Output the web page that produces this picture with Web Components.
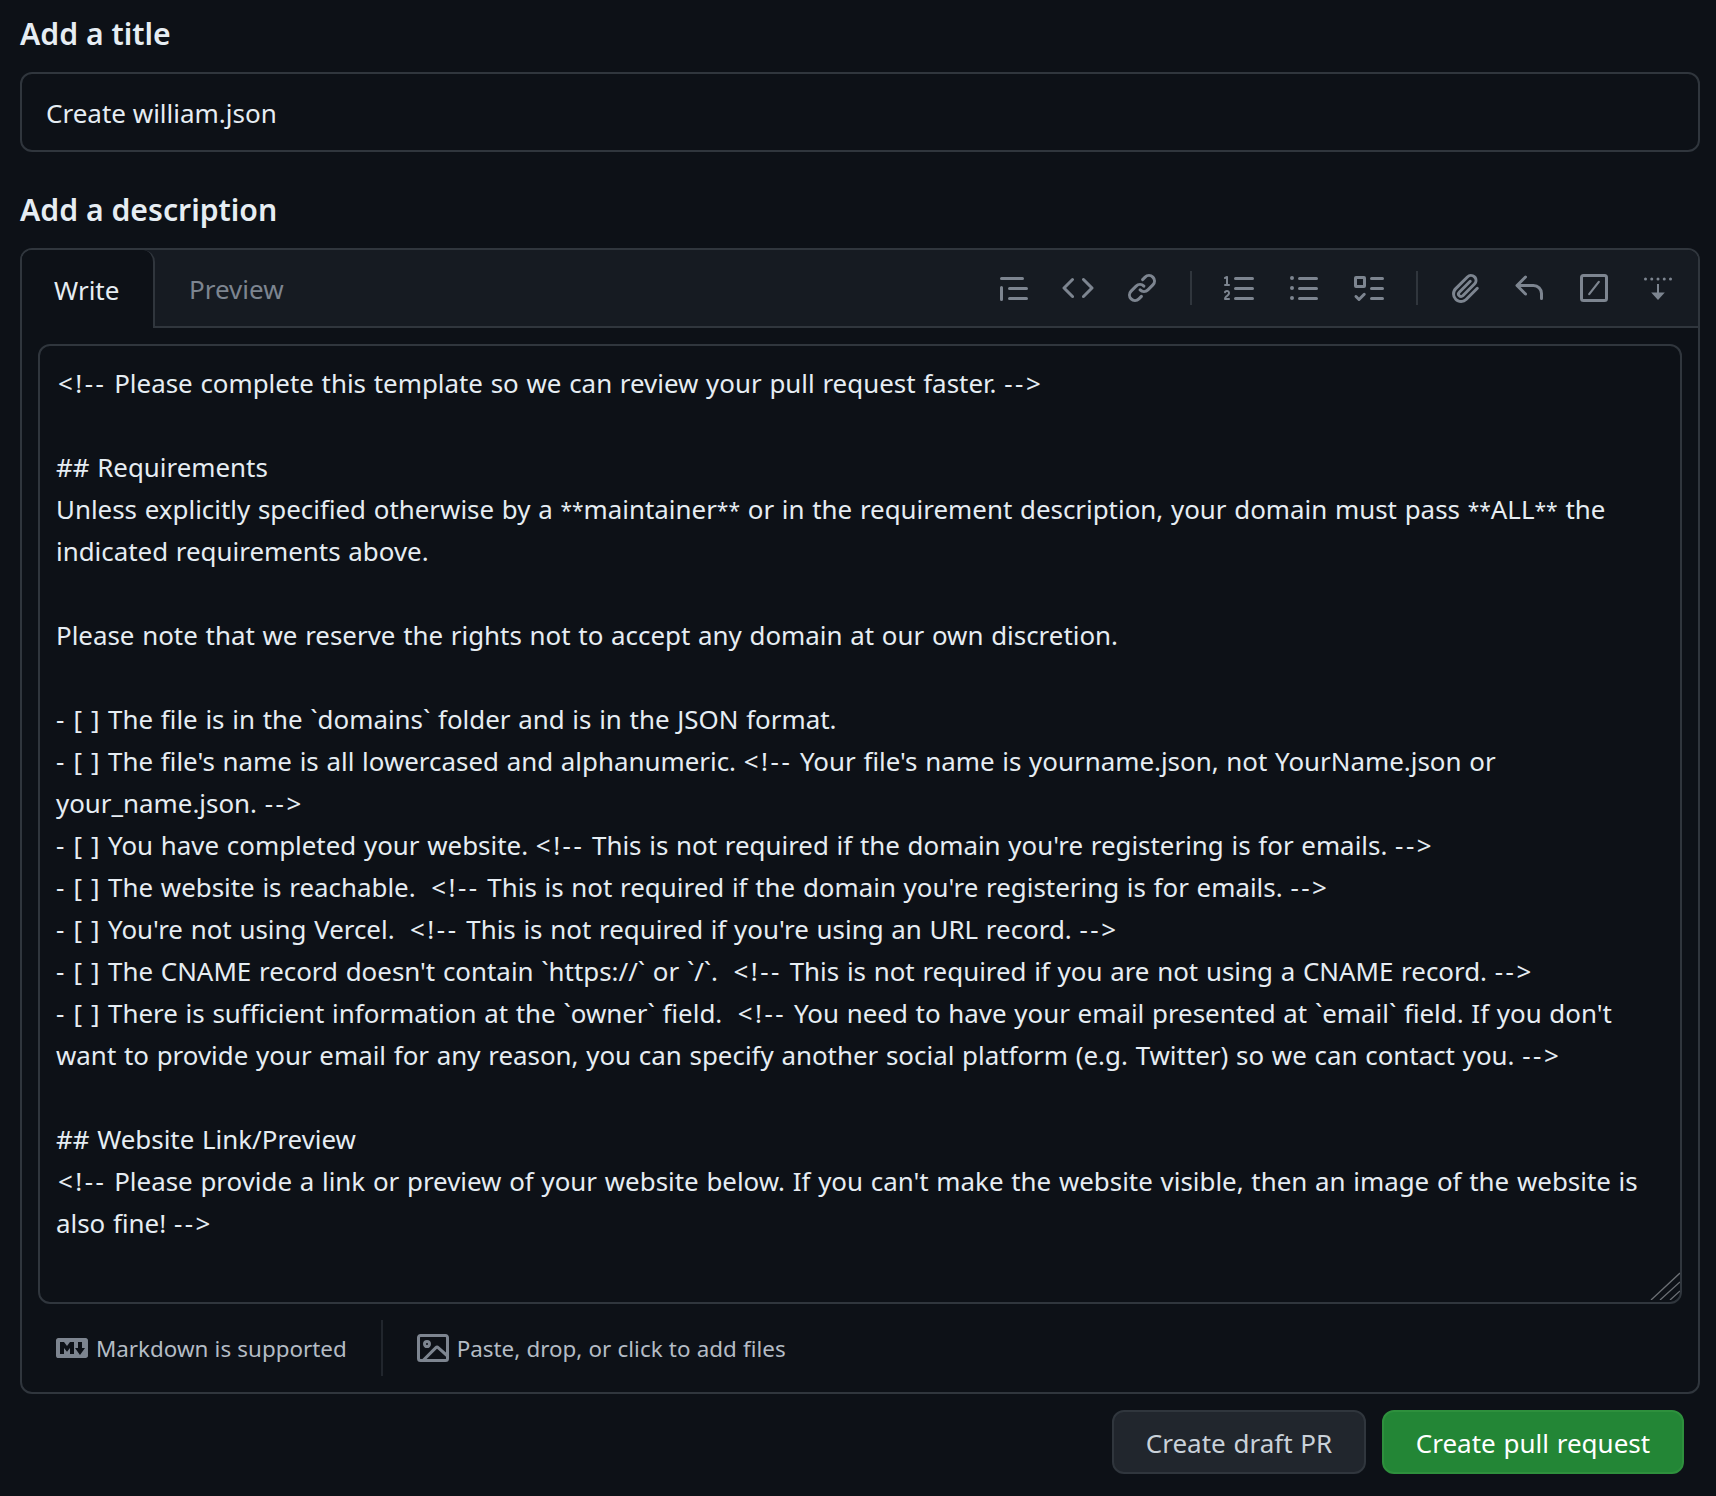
<!DOCTYPE html>
<html lang="en">
<head>
<meta charset="utf-8">
<title>Open a pull request</title>
<style>
  html, body { margin: 0; background: #0d1117; }
  body { font-family: "Noto Sans", "Open Sans", sans-serif; color: #e6edf3; }
</style>
</head>
<body>
<pr-form>
  <pr-label>Add a title</pr-label>
  <pr-input>Create william.json</pr-input>
  <pr-label style="margin-top:36px">Add a description</pr-label>
  <pr-editor>
    <pr-textarea>&lt;!-- Please complete this template so we can review your pull request faster. --&gt;

## Requirements
Unless explicitly specified otherwise by a **maintainer** or in the requirement description, your domain must pass **ALL** the
indicated requirements above.

Please note that we reserve the rights not to accept any domain at our own discretion.

- [ ] The file is in the `domains` folder and is in the JSON format.
- [ ] The file's name is all lowercased and alphanumeric. &lt;!-- Your file's name is yourname.json, not YourName.json or
your_name.json. --&gt;
- [ ] You have completed your website. &lt;!-- This is not required if the domain you're registering is for emails. --&gt;
- [ ] The website is reachable.  &lt;!-- This is not required if the domain you're registering is for emails. --&gt;
- [ ] You're not using Vercel.  &lt;!-- This is not required if you're using an URL record. --&gt;
- [ ] The CNAME record doesn't contain `https://` or `/`.  &lt;!-- This is not required if you are not using a CNAME record. --&gt;
- [ ] There is sufficient information at the `owner` field.  &lt;!-- You need to have your email presented at `email` field. If you don't
want to provide your email for any reason, you can specify another social platform (e.g. Twitter) so we can contact you. --&gt;

## Website Link/Preview
&lt;!-- Please provide a link or preview of your website below. If you can't make the website visible, then an image of the website is
also fine! --&gt;</pr-textarea>
  </pr-editor>
  <pr-actions>
    <pr-button>Create draft PR</pr-button>
    <pr-button variant="primary">Create pull request</pr-button>
  </pr-actions>
</pr-form>

<script>
const icons = {
  quote: `<path d="M1.75 2.5h10.5a.75.75 0 0 1 0 1.5H1.75a.75.75 0 0 1 0-1.5Zm4 5h8.5a.75.75 0 0 1 0 1.5h-8.5a.75.75 0 0 1 0-1.5Zm0 5h8.5a.75.75 0 0 1 0 1.5h-8.5a.75.75 0 0 1 0-1.5ZM2.5 7.75v6a.75.75 0 0 1-1.5 0v-6a.75.75 0 0 1 1.5 0Z"/>`,
  code: `<path d="m11.28 3.22 4.25 4.25a.75.75 0 0 1 0 1.06l-4.25 4.25a.749.749 0 0 1-1.275-.326.749.749 0 0 1 .215-.734L13.94 8l-3.72-3.72a.749.749 0 0 1 .326-1.275.749.749 0 0 1 .734.215Zm-6.56 0a.751.751 0 0 1 1.042.018.751.751 0 0 1 .018 1.042L2.06 8l3.72 3.72a.749.749 0 0 1-.326 1.275.749.749 0 0 1-.734-.215L.47 8.53a.75.75 0 0 1 0-1.06Z"/>`,
  link: `<path d="m7.775 3.275 1.25-1.25a3.5 3.5 0 1 1 4.95 4.95l-2.5 2.5a3.5 3.5 0 0 1-4.95 0 .751.751 0 0 1 .018-1.042.751.751 0 0 1 1.042-.018 1.998 1.998 0 0 0 2.83 0l2.5-2.5a2.002 2.002 0 0 0-2.83-2.83l-1.25 1.25a.751.751 0 0 1-1.042-.018.751.751 0 0 1-.018-1.042Zm-4.69 9.64a1.998 1.998 0 0 0 2.83 0l1.25-1.25a.751.751 0 0 1 1.042.018.751.751 0 0 1 .018 1.042l-1.25 1.25a3.5 3.5 0 1 1-4.95-4.95l2.5-2.5a3.5 3.5 0 0 1 4.95 0 .751.751 0 0 1-.018 1.042.751.751 0 0 1-1.042.018 1.998 1.998 0 0 0-2.83 0l-2.5 2.5a1.998 1.998 0 0 0 0 2.83Z"/>`,
  ordered: `<path d="M5 3.25a.75.75 0 0 1 .75-.75h8.5a.75.75 0 0 1 0 1.5h-8.5A.75.75 0 0 1 5 3.25Zm0 5a.75.75 0 0 1 .75-.75h8.5a.75.75 0 0 1 0 1.5h-8.5A.75.75 0 0 1 5 8.25Zm0 5a.75.75 0 0 1 .75-.75h8.5a.75.75 0 0 1 0 1.5h-8.5a.75.75 0 0 1-.75-.75ZM.924 10.32a.5.5 0 0 1-.851-.525l.001-.001.001-.002.002-.004.007-.011c.097-.144.215-.273.348-.384.228-.19.588-.392 1.068-.392.468 0 .858.181 1.126.484.259.294.377.673.377 1.038 0 .987-.686 1.495-1.156 1.845l-.047.035c-.303.225-.522.4-.654.597h1.357a.5.5 0 0 1 0 1H.5a.5.5 0 0 1-.5-.5c0-1.005.692-1.52 1.167-1.875l.035-.025c.531-.396.8-.625.8-1.078a.57.57 0 0 0-.128-.376C1.806 10.068 1.695 10 1.5 10a.658.658 0 0 0-.429.163.835.835 0 0 0-.144.153ZM2.003 2.5V6h.503a.5.5 0 0 1 0 1H.5a.5.5 0 0 1 0-1h.503V3.308l-.28.14a.5.5 0 0 1-.446-.895l1.003-.5a.5.5 0 0 1 .723.447Z"/>`,
  unordered: `<path d="M5.75 2.5h8.5a.75.75 0 0 1 0 1.5h-8.5a.75.75 0 0 1 0-1.5Zm0 5h8.5a.75.75 0 0 1 0 1.5h-8.5a.75.75 0 0 1 0-1.5Zm0 5h8.5a.75.75 0 0 1 0 1.5h-8.5a.75.75 0 0 1 0-1.5ZM2 14a1 1 0 1 1 0-2 1 1 0 0 1 0 2Zm1-6a1 1 0 1 1-2 0 1 1 0 0 1 2 0ZM2 4a1 1 0 1 1 0-2 1 1 0 0 1 0 2Z"/>`,
  tasks: `<path fill-rule="evenodd" d="M2 2h4a1 1 0 0 1 1 1v4a1 1 0 0 1-1 1H2a1 1 0 0 1-1-1V3a1 1 0 0 1 1-1Zm4.655 8.595a.75.75 0 0 1 0 1.06L4.03 14.28a.75.75 0 0 1-1.06 0l-1.5-1.5a.749.749 0 0 1 .326-1.275.749.749 0 0 1 .734.215l.97.97 2.095-2.095a.75.75 0 0 1 1.06 0ZM9.75 2.5h5.5a.75.75 0 0 1 0 1.5h-5.5a.75.75 0 0 1 0-1.5Zm0 5h5.5a.75.75 0 0 1 0 1.5h-5.5a.75.75 0 0 1 0-1.5Zm0 5h5.5a.75.75 0 0 1 0 1.5h-5.5a.75.75 0 0 1 0-1.5Zm-7.25-9v3h3v-3Z"/>`,
  paperclip: `<path d="M12.212 3.02a1.753 1.753 0 0 0-2.478.003l-5.83 5.83a3.007 3.007 0 0 0-.88 2.127c0 .795.315 1.551.88 2.116.567.567 1.333.89 2.126.89.79 0 1.548-.321 2.116-.89l5.48-5.48a.75.75 0 0 1 1.061 1.06l-5.48 5.48a4.492 4.492 0 0 1-3.177 1.33c-1.2 0-2.345-.487-3.187-1.33a4.483 4.483 0 0 1-1.32-3.177c0-1.195.475-2.341 1.32-3.186l5.83-5.83a3.25 3.25 0 0 1 5.553 2.297c0 .863-.343 1.691-.953 2.301L7.439 12.39c-.375.377-.884.59-1.416.593a1.998 1.998 0 0 1-1.412-.587 1.992 1.992 0 0 1 0-2.828l5.48-5.48a.751.751 0 0 1 1.042.018.751.751 0 0 1 .018 1.042l-5.48 5.48a.492.492 0 0 0 0 .707.499.499 0 0 0 .352.154.51.51 0 0 0 .356-.154l5.833-5.827a1.755 1.755 0 0 0 0-2.481Z"/>`,
  reply: `<path d="M6.78 1.97a.75.75 0 0 1 0 1.06L3.81 6h6.44A4.75 4.75 0 0 1 15 10.75v2.5a.75.75 0 0 1-1.5 0v-2.5a3.25 3.25 0 0 0-3.25-3.25H3.81l2.97 2.97a.749.749 0 0 1-.326 1.275.749.749 0 0 1-.734-.215L1.47 7.28a.75.75 0 0 1 0-1.06l4.25-4.25a.75.75 0 0 1 1.06 0Z"/>`,
  slash: `<rect x="1.75" y="1.75" width="12.5" height="12.5" rx="1" fill="none" stroke="currentColor" stroke-width="1.5"/><path d="M10.4 4.9 5.6 11.1" fill="none" stroke="currentColor" stroke-width="1.1" stroke-linecap="round"/>`,
  dotdown: `<circle cx="1.75" cy="3.5" r=".75"/><circle cx="4.87" cy="3.5" r=".75"/><circle cx="8" cy="3.5" r=".75"/><circle cx="11.12" cy="3.5" r=".75"/><circle cx="14.25" cy="3.5" r=".75"/><path d="M7.5 6h1v4.2H11.4L8 14 4.6 10.2h2.9Z"/>`,
  markdown: `<path fill-rule="evenodd" d="M14.85 3c.63 0 1.15.52 1.14 1.15v7.7c0 .63-.51 1.15-1.15 1.15H1.15C.52 13 0 12.48 0 11.84V4.15C0 3.52.52 3 1.15 3ZM9 11V5H7L5.5 7 4 5H2v6h2V8l1.5 1.92L7 8v3Zm2.99.5L14.5 8H13V5h-2v3H9.5Z"/>`,
  image: `<path fill-rule="evenodd" d="M16 13.25A1.75 1.75 0 0 1 14.25 15H1.75A1.75 1.75 0 0 1 0 13.25V2.75C0 1.784.784 1 1.75 1h12.5c.966 0 1.75.784 1.75 1.75ZM1.75 2.5a.25.25 0 0 0-.25.25v10.5c0 .138.112.25.25.25h.94l.03-.03 6.077-6.078a1.75 1.75 0 0 1 2.412-.06L14.5 10.31V2.75a.25.25 0 0 0-.25-.25Zm12.5 11a.25.25 0 0 0 .25-.25v-.917l-4.298-3.889a.25.25 0 0 0-.344.009L4.81 13.5ZM7 6a2 2 0 1 1-3.999.001A2 2 0 0 1 7 6ZM5.5 6a.5.5 0 1 0-1 0 .5.5 0 0 0 1 0Z"/>`
};

// shared helper, every component just sets its own markup
class ShadowBase extends HTMLElement {
  constructor() {
    super();
    this.attachShadow({ mode: "open" });
    this.shadowRoot.innerHTML = this.getInnerHTML();
  }
}

class PrIcon extends ShadowBase {
  getInnerHTML() {
    const name = this.getAttribute("name");
    return /*html*/ `
    <style>
      :host { display: block; width: 32px; height: 32px; flex: none; color: #7d8590; }
      svg { display: block; width: 32px; height: 32px; fill: currentColor; }
    </style>
    <svg viewBox="0 0 16 16" aria-hidden="true">${icons[name]}</svg>`;
  }
}

class PrForm extends ShadowBase {
  getInnerHTML() {
    return /*html*/ `
    <style>
      :host { display: block; padding: 12px 16px 0 20px; }
    </style>
    <slot></slot>`;
  }
}

class PrLabel extends ShadowBase {
  getInnerHTML() {
    return /*html*/ `
    <style>
      :host { display: block; font-size: 30.2px; line-height: 44px; font-weight: 600; margin-bottom: 16px; color: #e6edf3; }
    </style>
    <slot></slot>`;
  }
}

class PrInput extends ShadowBase {
  getInnerHTML() {
    return /*html*/ `
    <style>
      :host {
        display: flex; align-items: center; box-sizing: border-box; height: 80px;
        padding: 1px 24px 0; border: 2px solid #30363d; border-radius: 12px;
        font-size: 26px; color: #e6edf3;
      }
    </style>
    <slot></slot>`;
  }
}

class PrEditor extends ShadowBase {
  getInnerHTML() {
    const group = (names) => names.map((n) => `<pr-icon name="${n}"></pr-icon>`).join("");
    return /*html*/ `
    <style>
      :host { display: block; border: 2px solid #30363d; border-radius: 12px; }
      .head { display: flex; height: 78px; background: #161b22; border-radius: 10px 10px 0 0; }
      .tab {
        display: flex; align-items: center; box-sizing: border-box; font-size: 26px;
        padding: 2px 32px 0; color: #e6edf3;
      }
      .tab.active { width: 133px; background: #0d1117; border-right: 2px solid #30363d; border-radius: 10px 12px 0 0; }
      .rest { flex: 1; display: flex; align-items: center; box-sizing: border-box; border-bottom: 2px solid #30363d; padding-right: 24px; }
      .tab.muted { color: #7d8590; padding-left: 34px; }
      .tools { margin-left: auto; display: flex; align-items: center; }
      .group { display: flex; gap: 32px; }
      .group.last { gap: 32.4px; }
      .sep { width: 2px; height: 34px; background: #30363d; margin: 0 32px; }
      .sep.second { margin-right: 31px; }
      .body { padding: 16px 16px 0; }
      .foot { display: flex; align-items: center; height: 88px; padding: 0 34px; box-sizing: border-box; font-size: 22.4px; word-spacing: .4px; color: #b4bcc5; }
      .foot .item { display: flex; align-items: center; gap: 8px; }
      .foot .vr { width: 2px; height: 56px; background: #21262d; margin: 0 34px; }
    </style>
    <div class="head">
      <div class="tab active">Write</div>
      <div class="rest">
        <div class="tab muted">Preview</div>
        <div class="tools">
          <div class="group">${group(["quote", "code", "link"])}</div>
          <div class="sep"></div>
          <div class="group">${group(["ordered", "unordered", "tasks"])}</div>
          <div class="sep second"></div>
          <div class="group last">${group(["paperclip", "reply", "slash", "dotdown"])}</div>
        </div>
      </div>
    </div>
    <div class="body"><slot></slot></div>
    <div class="foot">
      <div class="item"><pr-icon name="markdown"></pr-icon>Markdown is supported</div>
      <div class="vr"></div>
      <div class="item"><pr-icon name="image"></pr-icon>Paste, drop, or click to add files</div>
    </div>`;
  }
}

class PrLine extends ShadowBase {
  getInnerHTML() {
    return /*html*/ `
    <style>
      :host { display: block; height: 42px; }
      slot { display: block; white-space: pre; }
      ::slotted(.comment) { letter-spacing: 2.5px; }
      ::slotted(.lead) { margin-left: 2px; }
      ::slotted(.check) { letter-spacing: .7px; }
      ::slotted(.bold) { font-size: 21px; vertical-align: 1px; }
    </style>
    <slot></slot>`;
  }
}

class PrTextarea extends ShadowBase {
  getInnerHTML() {
    return /*html*/ `
    <style>
      :host {
        display: block; position: relative; box-sizing: border-box; height: 960px;
        padding: 16px 16px 0; border: 2px solid #30363d; border-radius: 12px;
        font-size: 25.9px; line-height: 42px; word-spacing: 1px; color: #e6edf3;
      }
      svg { position: absolute; right: 0; bottom: 2px; width: 30px; height: 28px; }
    </style>
    <slot></slot>
    <svg viewBox="0 0 30 28" fill="none" stroke="#6b6f74" stroke-width="1.3">
      <path d="M1 28 30 1M10 28 30 10M20 28 30 19"/>
    </svg>`;
  }

  connectedCallback() {
    const classes = { "<!--": "comment", "-->": "comment", "**": "bold", "- [ ]": "check" };
    const lines = this.textContent.split("\n");
    this.textContent = "";
    lines.forEach((text) => {
      const line = document.createElement("pr-line");
      text.split(/(<!--|-->|\*\*|^- \[ \])/).forEach((part, i) => {
        if (classes[part]) {
          const span = document.createElement("span");
          span.className = classes[part];
          // i is 1 when the run opens the row, the split leaves an empty string before it
          if (part === "<!--" && i === 1) span.classList.add("lead");
          span.textContent = part;
          line.append(span);
        } else if (part) {
          line.append(part);
        }
      });
      this.append(line);
    });
  }
}

class PrActions extends ShadowBase {
  getInnerHTML() {
    return /*html*/ `
    <style>
      :host { display: flex; justify-content: flex-end; gap: 16px; padding: 16px 16px 0 0; }
    </style>
    <slot></slot>`;
  }
}

class PrButton extends ShadowBase {
  getInnerHTML() {
    const primary = this.getAttribute("variant") === "primary";
    return /*html*/ `
    <style>
      :host {
        display: flex; align-items: center; justify-content: center; box-sizing: border-box;
        height: 64px; width: ${primary ? 302 : 254}px; padding-top: 1px; border-radius: 12px; font-size: 26px; word-spacing: 1px;
        border: 2px solid ${primary ? "#2e903d" : "#30363d"};
        background: ${primary ? "#238636" : "#21262d"};
        color: ${primary ? "#ffffff" : "#c9d1d9"};
      }
    </style>
    <slot></slot>`;
  }
}

customElements.define("pr-icon", PrIcon);
customElements.define("pr-form", PrForm);
customElements.define("pr-label", PrLabel);
customElements.define("pr-input", PrInput);
customElements.define("pr-editor", PrEditor);
customElements.define("pr-line", PrLine);
customElements.define("pr-textarea", PrTextarea);
customElements.define("pr-actions", PrActions);
customElements.define("pr-button", PrButton);
</script>
</body>
</html>
